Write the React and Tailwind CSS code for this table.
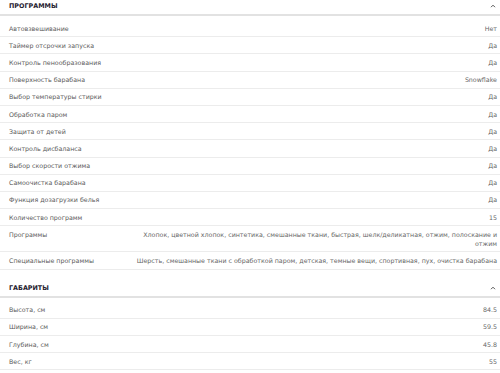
import React from 'react';

const programs = [
  ['Автовзвешивание', 'Нет'],
  ['Таймер отсрочки запуска', 'Да'],
  ['Контроль пенообразования', 'Да'],
  ['Поверхность барабана', 'Snowflake'],
  ['Выбор температуры стирки', 'Да'],
  ['Обработка паром', 'Да'],
  ['Защита от детей', 'Да'],
  ['Контроль дисбаланса', 'Да'],
  ['Выбор скорости отжима', 'Да'],
  ['Самоочистка барабана', 'Да'],
  ['Функция дозагрузки белья', 'Да'],
  ['Количество программ', '15'],
  ['Программы', 'Хлопок, цветной хлопок, синтетика, смешанные ткани, быстрая, шелк/деликатная, отжим, полоскание и отжим'],
  ['Специальные программы', 'Шерсть, смешанные ткани с обработкой паром, детская, темные вещи, спортивная, пух, очистка барабана'],
];

const sizes = [
  ['Высота, см', '84.5'],
  ['Ширина, см', '59.5'],
  ['Глубина, см', '45.8'],
  ['Вес, кг', '55'],
];

function Chevron() {
  return (
    <svg width="6" height="4" viewBox="0 0 6 4" className="text-[#555]">
      <path d="M1 3.2 L3 1.2 L5 3.2" fill="none" stroke="currentColor" strokeWidth="1" />
    </svg>
  );
}

function Section({ title, rows }) {
  return (
    <section>
      <div className="flex h-[16px] items-start justify-between border-b-2 border-[#e2e2e2] pl-[9px] pr-[4px] pt-[2px]">
        <h2 className="text-[6.4px] font-bold leading-[8px] text-[#1f2130]">{title}</h2>
        <span className="mt-[2px]"><Chevron /></span>
      </div>
      <div className="pt-[4px]">
        {rows.map(([label, value]) => (
          <div
            key={label}
            className="flex justify-between border-b border-[#ececec] pl-[9px] pr-[3px] py-[3.6px] text-[6.3px] leading-[9px] text-[#5a5a5a]"
          >
            <span className="w-[116px] shrink-0">{label}</span>
            <span className="flex-1 text-right text-[#666]">{value}</span>
          </div>
        ))}
      </div>
    </section>
  );
}

export default function App() {
  return (
    <div className="h-[373px] w-[500px] overflow-hidden bg-white font-['DejaVu_Sans',sans-serif]">
      <Section title="ПРОГРАММЫ" rows={programs} />
      <div className="mt-[12px]">
        <Section title="ГАБАРИТЫ" rows={sizes} />
      </div>
    </div>
  );
}
